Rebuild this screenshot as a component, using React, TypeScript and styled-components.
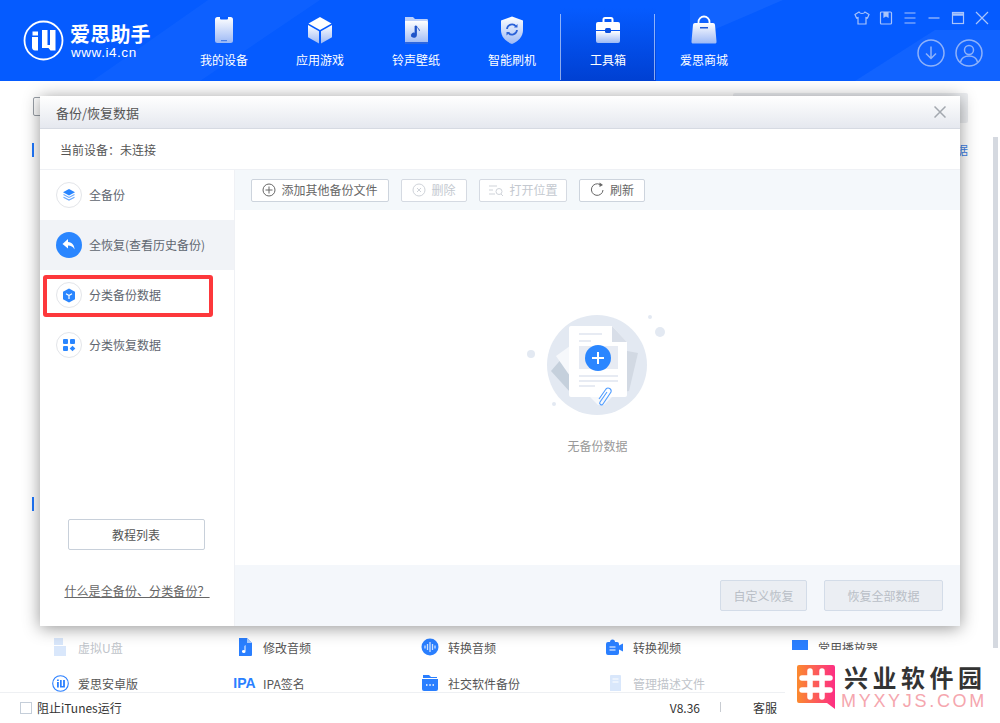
import React, { useId } from "react";
import styled, { createGlobalStyle } from "styled-components";

const Global = createGlobalStyle`
  html, body { margin: 0; padding: 0; background: #fff; }
  body { font-family: "Noto Sans CJK SC", "Liberation Sans", sans-serif; }
  #root { height: 723px; overflow: hidden; }
  * { box-sizing: border-box; }
`;

const Page = styled.div`
  width: 1000px; height: 723px; display: flex; flex-direction: column; position: relative; overflow: hidden;
`;

/* ---------- header ---------- */
const Header = styled.header`
  height: 81px; flex: none; position: relative; display: flex; overflow: hidden;
  background: #055bff;
`;
const Streaks = styled.svg`
  position: absolute; left: 0; top: 0; width: 1000px; height: 81px; pointer-events: none;
`;
const Brand = styled.div`
  width: 176px; flex: none; padding: 20px 0 0 23px; display: flex; gap: 6px; position: relative;
`;
const BrandText = styled.div`
  display: flex; flex-direction: column; color: #fff; padding-top: 3px;
`;
const BrandName = styled.span`
  font-size: 20px; line-height: 21px; height: 21px; font-weight: 700; letter-spacing: .2px; white-space: nowrap;
`;
const BrandUrl = styled.span`
  font-family: "Liberation Sans", sans-serif; font-size: 13.500px; line-height: 14px; letter-spacing: .55px; margin: 2px 0 0 1px;
`;
const Nav = styled.nav`
  display: flex; position: relative; height: 81px;
`;
const NavItem = styled.div<{ $active?: boolean }>`
  width: 96px; height: 81px; display: flex; flex-direction: column; align-items: center;
  padding-top: 15px; color: #fff; font-size: 12px; position: relative;
  ${(p) => p.$active && `
    background: linear-gradient(#055bff 10%, #0040d2);
    &::before, &::after { content: ""; position: absolute; top: 14px; bottom: 1px; width: 1px; background: rgba(255,255,255,.55); }
    &::before { left: 0; } &::after { right: 1px; }
  `}
`;
const NavIconBox = styled.div`
  width: 32px; height: 30px; display: flex; align-items: center; justify-content: center;
`;
const NavLabel = styled.span`
  line-height: 18px; margin-top: 6px;
`;
const WinControls = styled.div`
  position: absolute; right: 10px; top: 10px; display: flex; gap: 8px;
`;
const CircleTools = styled.div`
  position: absolute; right: 17px; top: 39px; display: flex; gap: 10px;
`;

function NavSvg({ children }: { children: (fill: string) => React.ReactNode }) {
  const id = useId();
  return (
    <svg width="32" height="30" viewBox="0 0 32 30">
      <defs>
        <linearGradient id={id} x1="0" y1="0" x2="0" y2="1">
          <stop offset="0" stopColor="#fff" />
          <stop offset="1" stopColor="#9db9f5" />
        </linearGradient>
      </defs>
      {children(`url(#${id})`)}
    </svg>
  );
}

const navIcons: Record<string, React.ReactNode> = {
  phone: (
    <NavSvg>{(f) => (<>
      <rect x="7" y="2" width="18" height="26" rx="2.5" fill={f} />
      <path d="M12 2h8v1.6a1 1 0 0 1-1 1h-6a1 1 0 0 1-1-1z" fill="#055bff" />
      <rect x="13" y="25" width="6" height="1.2" fill="#4a7fe8" />
    </>)}</NavSvg>
  ),
  box: (
    <NavSvg>{(f) => (<>
      <path d="M16 2 27.5 8.5 16 15 4.500 8.500z" fill="#fff" />
      <path d="M4 10 15 16.300V28.500L4 22.200z" fill={f} />
      <path d="M28 10 17 16.300V28.500L28 22.200z" fill={f} />
    </>)}</NavSvg>
  ),
  folder: (
    <NavSvg>{(f) => (<>
      <path d="M5 2h8l2 2h12a1.500 1.500 0 0 1 1 1v2H5z" fill="#bcd0fa" />
      <path d="M5 6h21.500A1.500 1.500 0 0 1 28 7.500v19.500a1.500 1.500 0 0 1-1.500 1.500h-20A1.500 1.500 0 0 1 5 27z" fill={f} />
      <path d="M5 27h23v.500a1.500 1.500 0 0 1-1.500 1.500h-20A1.500 1.500 0 0 1 5 27.500z" fill="#2d66df" />
      <path d="M16.500 11v9.200a2.600 2.200 0 1 1-1.500-2V11zM16.500 11c.3 2 3 2.500 3 5" fill="#1f54c9" stroke="#1f54c9" strokeWidth=".8" />
    </>)}</NavSvg>
  ),
  shield: (
    <NavSvg>{(f) => (<>
      <path d="M16 1.500 27 5.500V15c0 7-5 11.500-11 14C10 26.500 5 22 5 15V5.500z" fill={f} />
      <path d="M11 14a5 5 0 0 1 9-2.500M21 15a5 5 0 0 1-9 2.500" fill="none" stroke="#2b62d8" strokeWidth="1.800" />
      <path d="M21.500 9v3.500H18zM10.500 20.500V17H14z" fill="#2b62d8" />
    </>)}</NavSvg>
  ),
  kit: (
    <NavSvg>{(f) => (<>
      <path d="M11.500 7V4.500a1.500 1.500 0 0 1 1.500-1.500h6a1.500 1.500 0 0 1 1.500 1.500V7" fill="none" stroke="#fff" strokeWidth="2" />
      <path d="M4 9a2 2 0 0 1 2-2h20a2 2 0 0 1 2 2v6H4z" fill="#fff" />
      <path d="M4 16h24v10a2 2 0 0 1-2 2H6a2 2 0 0 1-2-2z" fill={f} />
      <rect x="13" y="13" width="6" height="5" rx="1.500" fill="#0b4fe0" />
    </>)}</NavSvg>
  ),
  bag: (
    <NavSvg>{(f) => (<>
      <path d="M10.500 9V7a5.500 5.500 0 0 1 11 0v2" fill="none" stroke="#fff" strokeWidth="1.800" />
      <path d="M7 8h18a2 2 0 0 1 2 1.800l1.500 16.400a2 2 0 0 1-2 2.300H5.500a2 2 0 0 1-2-2.300L5 9.800A2 2 0 0 1 7 8z" fill={f} />
      <rect x="12" y="12" width="8" height="1.500" fill="#1d58d8" />
    </>)}</NavSvg>
  ),
};

const navItems = [
  { label: "我的设备", icon: "phone" },
  { label: "应用游戏", icon: "box" },
  { label: "铃声壁纸", icon: "folder" },
  { label: "智能刷机", icon: "shield" },
  { label: "工具箱", icon: "kit", active: true },
  { label: "爱思商城", icon: "bag" },
];

const ctl = { fill: "none", stroke: "#a9c4fb", strokeWidth: 1.2 };

/* ---------- background page ---------- */
const Main = styled.main`
  flex: 1; position: relative; overflow: hidden; display: flex; flex-direction: column; justify-content: space-between;
`;
const TopStrip = styled.div`
  display: flex; justify-content: space-between; align-items: flex-start; padding: 12px 32px 0 33px;
`;
const DeviceGlyph = styled.div`
  width: 12px; height: 19px; margin-top: 4px; border: 1px solid #9aa0a8; border-radius: 2px;
`;
const SearchStrip = styled.div`
  width: 235px; height: 30px; background: #eceef1; border-radius: 2px;
`;
const SectionMark = styled.div`
  position: absolute; left: 32px; width: 2px; height: 14px; background: #1f78ff;
`;
const Clipped = styled.span`
  position: absolute; left: 956px; top: 61px; font-size: 12px; line-height: 16px; color: #3d80e6;
`;
const ScrollThumb = styled.div`
  position: absolute; right: 2px; top: 56px; bottom: 44px; width: 5px; background: #d5d9e0;
`;
const ToolGrid = styled.div`
  display: grid; grid-template-columns: repeat(5, 185px); grid-auto-rows: 36px; padding: 0 0 0 46px; margin-bottom: -9px;
`;
const Tool = styled.div<{ $off?: boolean }>`
  display: flex; align-items: center; font-size: 12px; color: ${(p) => (p.$off ? "#c0c4ca" : "#555")};
  height: 36px;
`;
const ToolIcon = styled.div`
  width: 32px; flex: none; display: flex; justify-content: center; padding-right: 4px;
`;
const IpaMark = styled.span`
  font-family: "Liberation Sans", sans-serif; font-weight: 700; font-size: 14px; color: #2a7fff; margin-left: -2px; margin-right: -1px;
`;

const ToolBlue = "#2a7fff";
const tools: { label: string; off?: boolean; icon: React.ReactNode }[] = [
  { label: "虚拟U盘", off: true, icon: (
    <svg width="14" height="18" viewBox="0 0 14 18"><path d="M1 0h9v7h3v11H1z" fill="#d9e7fb" /><path d="M1 7h12v1H1z" fill="#fff" /></svg>
  ) },
  { label: "修改音频", icon: (
    <svg width="14" height="18" viewBox="0 0 14 18"><path d="M1 0h8l5 5v12a1 1 0 0 1-1 1H1z" fill={ToolBlue} /><path d="M9 0v5h5z" fill="#a9ccff" /><path d="M7.500 7v6.500a1.800 1.500 0 1 1-1-1.300V8z" fill="#fff" /></svg>
  ) },
  { label: "转换音频", icon: (
    <svg width="18" height="18" viewBox="0 0 18 18"><circle cx="9" cy="9" r="8.500" fill={ToolBlue} /><path d="M4 7.500v3M6.500 6v6M9 4v10M11.500 6v6M14 7.500v3" stroke="#cfe2ff" strokeWidth="1.300" /></svg>
  ) },
  { label: "转换视频", icon: (
    <svg width="18" height="16" viewBox="0 0 18 16"><path d="M2 3h2a2.500 2.500 0 0 1 5 0h2a2 2 0 0 1 2 2v1.500l4-2v8l-4-2V14a2 2 0 0 1-2 2H2a2 2 0 0 1-2-2V5a2 2 0 0 1 2-2z" fill={ToolBlue} /><path d="M3.500 8h6M3.500 11h6" stroke="#fff" strokeWidth="1.200" /></svg>
  ) },
  { label: "常用播放器", icon: (
    <svg width="16" height="14" viewBox="0 0 16 14"><rect width="16" height="14" fill={ToolBlue} /></svg>
  ) },
  { label: "爱思安卓版", icon: (
    <svg width="17" height="17" viewBox="0 0 17 17"><circle cx="8.500" cy="8.500" r="7.800" fill="none" stroke={ToolBlue} strokeWidth="1.100" /><path d="M5 7h1.800v5.500H5zM5 4.500h1.800V6H5zM8 5h1.700v6h1.400V5h1.800v7.500H8z" fill={ToolBlue} /></svg>
  ) },
  { label: "IPA签名", icon: <IpaMark>IPA</IpaMark> },
  { label: "社交软件备份", icon: (
    <svg width="16" height="16" viewBox="0 0 16 16"><path d="M1 0h6l2 2h6v1H1z" fill={ToolBlue} /><path d="M0 4h16v10a2 2 0 0 1-2 2H2a2 2 0 0 1-2-2z" fill={ToolBlue} /><path d="M4 10h1.500M7.300 10h1.500M10.500 10H12" stroke="#fff" strokeWidth="1.500" /></svg>
  ) },
  { label: "管理描述文件", off: true, icon: (
    <svg width="13" height="16" viewBox="0 0 13 16"><path d="M2 0h9a1 1 0 0 1 1 1v15H1V1a1 1 0 0 1 1-1z" fill="#d9e7fb" /><path d="M3.500 4h6M3.500 7h6" stroke="#fff" /></svg>
  ) },
];

/* ---------- footer ---------- */
const Footer = styled.footer`
  height: 31px; flex: none; display: flex; align-items: center; background: #fff; border-top: 1px solid #eef0f3;
  padding: 0 0 2px 20px; font-size: 12px; color: #333; position: relative; z-index: 1;
`;
const CheckBox = styled.span`
  width: 12px; height: 12px; border: 1px solid #c5ced9; background: #fff; margin-right: 5px; position: relative; top: 1px;
`;
const Version = styled.span`
  margin-left: auto; font-family: "Noto Sans CJK SC", sans-serif;
`;
const Divider = styled.span`
  width: 1px; height: 10px; background: #c8ccd2; margin: 0 32px 0 20px;
`;
const Service = styled.span`
  margin-right: 223px;
`;

/* ---------- modal ---------- */
const Modal = styled.section`
  position: absolute; left: 40px; top: 15px; width: 920px; height: 530px; background: #fff;
  display: flex; flex-direction: column; box-shadow: 0 2px 16px rgba(0,0,0,.42); z-index: 2;
`;
const ModalTitleBar = styled.div`
  height: 33px; flex: none; display: flex; justify-content: space-between; align-items: center;
  padding: 0 14px 0 16px; background: linear-gradient(#fff, #e5e8ef); border-bottom: 1px solid #d6dae2;
  font-size: 13px; color: #555;
`;
const DeviceRow = styled.div`
  height: 41px; flex: none; display: flex; align-items: center; padding-left: 20px; font-size: 12px; color: #555;
  border-bottom: 1px solid #eff1f5;
`;
const Body = styled.div`
  flex: 1; display: flex; min-height: 0;
`;
const Sidebar = styled.aside`
  width: 195px; flex: none; display: flex; flex-direction: column; border-right: 1px solid #eff1f5; position: relative;
`;
const SideItem = styled.div<{ $active?: boolean }>`
  height: 50px; display: flex; align-items: center; gap: 7px; padding-left: 16px; font-size: 12px; color: #5f6670;
  background: ${(p) => (p.$active ? "#f1f3f7" : "transparent")};
`;
const SideLabel = styled.span`
  position: relative; top: -1px;
`;
const SideIcon = styled.div<{ $solid?: boolean }>`
  width: 26px; height: 26px; border-radius: 50%; display: flex; align-items: center; justify-content: center;
  background: ${(p) => (p.$solid ? "#2a86ff" : "#fff")};
  border: ${(p) => (p.$solid ? "none" : "1px solid #e3e5e9")};
`;
const Highlight = styled.div`
  position: absolute; left: 3px; top: 105px; width: 170px; height: 42px; border: 4px solid #fd383b; border-radius: 3px;
`;
const SideBottom = styled.div`
  margin-top: auto; display: flex; flex-direction: column; align-items: center; padding: 0 2px 26px 0; gap: 32px;
`;
const TutorialButton = styled.div`
  width: 137px; height: 31px; border: 1px solid #c8d0da; border-radius: 2px; display: flex; align-items: center; justify-content: center;
  font-size: 12px; color: #555;
`;
const HelpLink = styled.a`
  font-size: 12px; line-height: 18px; color: #666; text-decoration: underline; letter-spacing: .1px; margin-left: 2px;
`;
const Right = styled.div`
  flex: 1; display: flex; flex-direction: column; min-width: 0;
`;
const Toolbar = styled.div`
  height: 40px; flex: none; display: flex; align-items: center; gap: 12px; padding-left: 16px; background: #f4f8fb;
`;
const ToolButton = styled.div<{ $w: number; $off?: boolean }>`
  width: ${(p) => p.$w}px; height: 23px; border: 1px solid ${(p) => (p.$off ? "#d5dae2" : "#cdd4dd")}; border-radius: 2px; background: #fff;
  display: flex; align-items: center; justify-content: center; gap: 5px; font-size: 12px; line-height: 19px; padding-bottom: 1px;
  color: ${(p) => (p.$off ? "#c4c9d0" : "#666")};
`;
const Empty = styled.div`
  flex: 1; display: flex; flex-direction: column; align-items: center; padding-top: 90px;
`;
const Illustration = styled.svg`
  margin-left: -5px; flex: none;
`;
const EmptyText = styled.span`
  font-size: 12px; line-height: 18px; color: #999; margin-top: 0;
`;
const ActionBar = styled.div`
  height: 61px; flex: none; background: #f4f7fb; display: flex; align-items: flex-start; justify-content: flex-end;
  gap: 17px; padding: 15px 17px 0 0;
`;
const ActionButton = styled.div<{ $w: number }>`
  width: ${(p) => p.$w}px; height: 31px; background: #ebeef3; border: 1px solid #d3dce8; border-radius: 2px;
  display: flex; align-items: center; justify-content: center; font-size: 12px; color: #b9bec6;
`;

/* ---------- watermark ---------- */
const Watermark = styled.div`
  position: absolute; left: 785px; top: 650px; width: 215px; height: 73px; background: #fff; z-index: 3;
  display: flex; gap: 6px; padding: 15px 0 0 12px;
`;
const WmText = styled.div`
  display: flex; flex-direction: column; margin-top: -1px;
`;
const WmName = styled.span`
  font-size: 24px; line-height: 26px; font-weight: 700; color: #333; letter-spacing: 4.500px; white-space: nowrap; margin-left: 3px;
`;
const WmUrl = styled.span`
  font-family: "Liberation Sans", sans-serif; font-size: 18px; line-height: 22px; color: #f5a6ae; letter-spacing: 2.700px; white-space: nowrap;
`;

const sideIcons = [
  <svg key="a" width="14" height="14" viewBox="0 0 14 14"><path d="M7 1l6 3.200L7 7.400 1 4.200z" fill="#2a86ff" /><path d="M1.500 6.600 7 9.500l5.500-2.900M1.500 9.200 7 12.100l5.500-2.900" fill="none" stroke="#6aa9ff" strokeWidth="1.100" /></svg>,
  <svg key="b" width="16" height="14" viewBox="0 0 16 14"><path d="M7 1 1.500 6 7 10.500V7.600c3 0 5 1 6.500 4 0-4-2-7-6.500-7.500z" fill="#fff" /></svg>,
  <svg key="c" width="14" height="15" viewBox="0 0 14 15"><path d="M7 .5l6 3.300v7.400l-6 3.300-6-3.300V3.800z" fill="#2a86ff" /><path d="M7 7.500V11M7 7.500 4 5.800M7 7.500l3-1.700" stroke="#fff" strokeWidth="1.200" /></svg>,
  <svg key="d" width="14" height="14" viewBox="0 0 14 14"><rect x="1" y="1" width="5" height="5" rx="1" fill="#2a86ff" /><rect x="8" y="1" width="5" height="5" rx="1" fill="#2a86ff" /><rect x="1" y="8" width="5" height="5" rx="1" fill="#2a86ff" /><path d="M10.500 7.700l2.800 2.800-2.800 2.800-2.800-2.800z" fill="#2a86ff" /></svg>,
];
const sideLabels = ["全备份", "全恢复(查看历史备份)", "分类备份数据", "分类恢复数据"];

export default function App() {
  return (
    <Page>
      <Global />
      <Header>
        <Streaks viewBox="0 0 1000 81">
          <path d="M92 81 108 70 208 0H320L200 81z" fill="#fff" opacity=".035" />
          <path d="M690 40 783 0H690z" fill="#fff" opacity=".05" />
          <path d="M855 81 935 30 1000 30V81z" fill="#fff" opacity=".05" />
        </Streaks>
        <Brand>
          <svg width="41" height="41" viewBox="0 0 41 41">
            <circle cx="20.500" cy="20.500" r="19" fill="none" stroke="#fff" strokeWidth="1.800" />
            <path d="M9 17h6v13.500h-3c-2 0-3-1.500-3-3zM9.500 11.500h5.500V15.500H9.500zM19 10h5.500v15h2.500V10h5.500v20.500h-5l-2-2.500h-6.500z" fill="#fff" />
          </svg>
          <BrandText>
            <BrandName>爱思助手</BrandName>
            <BrandUrl>www.i4.cn</BrandUrl>
          </BrandText>
        </Brand>
        <Nav>
          {navItems.map((n) => (
            <NavItem key={n.label} $active={n.active}>
              <NavIconBox>{navIcons[n.icon]}</NavIconBox>
              <NavLabel>{n.label}</NavLabel>
            </NavItem>
          ))}
        </Nav>
        <WinControls>
          <svg width="16" height="16" viewBox="0 0 16 16" {...ctl}><path d="M5 2 1 4.500 2.500 8 4 7.500V14h8V7.500L13.500 8 15 4.500 11 2c-1 2-5 2-6 0z" /></svg>
          <svg width="16" height="16" viewBox="0 0 16 16" {...ctl}><rect x="2.500" y="2" width="11" height="12" rx="1" /><path d="M6 2v5l2-1.200L10 7V2" fill="#a9c4fb" /></svg>
          <svg width="16" height="16" viewBox="0 0 16 16" {...ctl}><path d="M2.500 3h11M2.500 8h11M2.500 13h11" /></svg>
          <svg width="16" height="16" viewBox="0 0 16 16" {...ctl}><path d="M2.500 8h11" /></svg>
          <svg width="16" height="16" viewBox="0 0 16 16" {...ctl}><rect x="2.500" y="2.500" width="11" height="11" /><path d="M2.500 4.500h11" strokeWidth="2.500" /></svg>
          <svg width="16" height="16" viewBox="0 0 16 16" {...ctl}><path d="M2 2l12 12M14 2 2 14" /></svg>
        </WinControls>
        <CircleTools>
          <svg width="28" height="28" viewBox="0 0 28 28" fill="none" stroke="#8fb2fa" strokeWidth="1.500"><circle cx="14" cy="14" r="13" /><path d="M14 7.500v12M9 14.500l5 5 5-5" /></svg>
          <svg width="28" height="28" viewBox="0 0 28 28" fill="none" stroke="#8fb2fa" strokeWidth="1.500"><circle cx="14" cy="14" r="13" /><circle cx="14" cy="11" r="4.500" /><path d="M5.500 23c1-4 4.500-6 8.500-6s7.500 2 8.500 6" /></svg>
        </CircleTools>
      </Header>

      <Main>
        <TopStrip>
          <DeviceGlyph />
          <SearchStrip />
        </TopStrip>
        <SectionMark style={{ top: 62 }} />
        <SectionMark style={{ top: 416 }} />
        <Clipped>据</Clipped>
        <ScrollThumb />
        <ToolGrid>
          {tools.map((t) => (
            <Tool key={t.label} $off={t.off}>
              <ToolIcon>{t.icon}</ToolIcon>
              {t.label}
            </Tool>
          ))}
        </ToolGrid>

        <Modal>
          <ModalTitleBar>
            备份/恢复数据
            <svg width="12" height="12" viewBox="0 0 12 12" fill="none" stroke="#a3a8af" strokeWidth="1.500"><path d="M.5.500l11 11M11.500.500l-11 11" /></svg>
          </ModalTitleBar>
          <DeviceRow>当前设备：未连接</DeviceRow>
          <Body>
            <Sidebar>
              {sideLabels.map((l, i) => (
                <SideItem key={l} $active={i === 1}>
                  <SideIcon $solid={i === 1}>{sideIcons[i]}</SideIcon>
                  <SideLabel>{l}</SideLabel>
                </SideItem>
              ))}
              <Highlight />
              <SideBottom>
                <TutorialButton>教程列表</TutorialButton>
                <HelpLink>什么是全备份、分类备份？</HelpLink>
              </SideBottom>
            </Sidebar>
            <Right>
              <Toolbar>
                <ToolButton $w={138}>
                  <svg width="14" height="14" viewBox="0 0 14 14" fill="none" stroke="#666" strokeWidth="1"><circle cx="7" cy="7" r="6" /><path d="M7 3.500v7M3.500 7h7" /></svg>
                  添加其他备份文件
                </ToolButton>
                <ToolButton $w={66} $off>
                  <svg width="14" height="14" viewBox="0 0 14 14" fill="none" stroke="#cfd3d9" strokeWidth="1"><circle cx="7" cy="7" r="6" /><path d="M5 5l4 4M9 5l-4 4" /></svg>
                  删除
                </ToolButton>
                <ToolButton $w={88} $off>
                  <svg width="16" height="14" viewBox="0 0 16 14" fill="none" stroke="#cfd3d9" strokeWidth="1"><path d="M1 3h8M1 7h4M1 11h6" /><circle cx="11" cy="8.500" r="3" /><path d="M13 11l2 2" /></svg>
                  打开位置
                </ToolButton>
                <ToolButton $w={66}>
                  <svg width="15" height="15" viewBox="0 0 15 15" fill="none" stroke="#666" strokeWidth="1"><path d="M13 8A5.800 5.800 0 1 1 10 2.500" /><path d="M9.500 .5l3.500 2.500-3.500 2z" fill="#666" stroke="none" /></svg>
                  刷新
                </ToolButton>
              </Toolbar>
              <Empty>
                <Illustration width="170" height="137" viewBox="0 0 170 137">
                  <circle cx="87" cy="65" r="50" fill="#e3e9f2" />
                  <circle cx="140" cy="17" r="2" fill="#e3e9f2" />
                  <circle cx="150" cy="32" r="5" fill="#e3e9f2" />
                  <circle cx="21" cy="54" r="4" fill="#e3e9f2" />
                  <circle cx="44" cy="104" r="2" fill="#e3e9f2" />
                  <path d="M41 71 60 49 80 88 60 92z" fill="#c5d0dc" />
                  <path d="M112 50l16 3-9 38-24 4z" fill="#d2d9e3" />
                  <path d="M46 56 60 46v30z" fill="#f6f8fb" />
                  <path d="M80 97h22l-8 8H88z" fill="#f6f8fb" />
                  <path d="M61 26h41l15 16v53a2 2 0 0 1-2 2H61a2 2 0 0 1-2-2V28a2 2 0 0 1 2-2z" fill="#fff" />
                  <path d="M102 26l15 16h-15z" fill="#d8dee8" />
                  <path d="M69 34h23M69 41h12M69 76h39M69 81h39M69 86h16" stroke="#e7ebf3" strokeWidth="1.800" />
                  <rect x="69" y="46" width="39" height="23" fill="#e7ebf3" />
                  <circle cx="88" cy="58" r="13" fill="#2a86ff" />
                  <path d="M88 52v12M82 58h12" stroke="#fff" strokeWidth="2" />
                  <path d="M89 99l7-10a3 3 0 0 1 5 3l-8 12a1.800 1.800 0 0 1-3-2l7-10" fill="none" stroke="#4f9cff" strokeWidth="1.100" />
                </Illustration>
                <EmptyText>无备份数据</EmptyText>
              </Empty>
              <ActionBar>
                <ActionButton $w={87}>自定义恢复</ActionButton>
                <ActionButton $w={119}>恢复全部数据</ActionButton>
              </ActionBar>
            </Right>
          </Body>
        </Modal>
      </Main>

      <Footer>
        <CheckBox />
        阻止iTunes运行
        <Version>V8.36</Version>
        <Divider />
        <Service>客服</Service>
      </Footer>

      <Watermark>
        <svg width="38" height="44" viewBox="0 0 38 44">
          <defs>
            <linearGradient id="wm" x1="0" y1="0" x2="1" y2="0">
              <stop offset="0" stopColor="#fb8a2e" />
              <stop offset="1" stopColor="#fd2e84" />
            </linearGradient>
          </defs>
          <path d="M2 0h34a2 2 0 0 1 2 2v42l-8-6H2a2 2 0 0 1-2-2V2a2 2 0 0 1 2-2z" fill="url(#wm)" />
          <path d="M13 6v26M25 6v26M5 13h28M5 25h28" stroke="#fff" strokeWidth="5.500" strokeLinecap="round" />
        </svg>
        <WmText>
          <WmName>兴业软件园</WmName>
          <WmUrl>MYXYJS.COM</WmUrl>
        </WmText>
      </Watermark>
    </Page>
  );
}
